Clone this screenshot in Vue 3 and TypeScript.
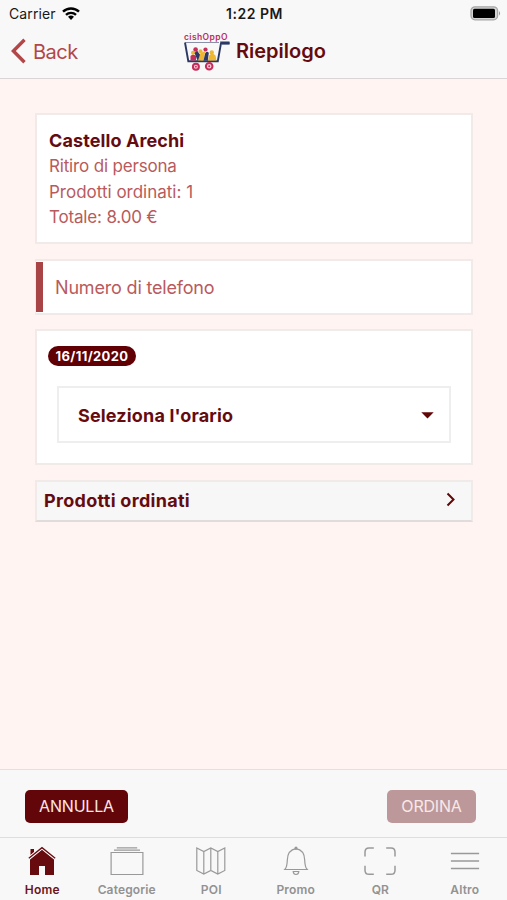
<script setup lang="ts">
import { ref } from 'vue'

interface Tab {
  id: string
  label: string
  spacing: number
}

const tabs: Tab[] = [
  { id: 'home', label: 'Home', spacing: 0.2 },
  { id: 'categorie', label: 'Categorie', spacing: 0.15 },
  { id: 'poi', label: 'POI', spacing: 0.2 },
  { id: 'promo', label: 'Promo', spacing: 0.2 },
  { id: 'qr', label: 'QR', spacing: 0 },
  { id: 'altro', label: 'Altro', spacing: 0.15 },
]
const active = ref('home')
const phone = ref('')
</script>

<template>
  <div class="screen">
    <header class="top">
      <div class="status">
        <div class="carrier">
          <span>Carrier</span>
          <svg class="wifi" width="18" height="14" viewBox="0 0 18 14">
            <g fill="none" stroke="#000" stroke-width="2.4">
              <path d="M1 4.700C5.400.400 12.600.400 17 4.700" />
              <path d="M4 7.900C6.800 5.200 11.200 5.200 14 7.900" />
            </g>
            <path d="M6 9.800Q9 7.400 12 9.800L9 12.900Z" />
          </svg>
        </div>
        <span class="clock">1:22 PM</span>
        <svg class="battery" width="32" height="15" viewBox="0 0 32 15">
          <rect x="1" y=".8" width="26.600" height="13" rx="4" fill="#d4d4d4" stroke="#a6a6a6" stroke-width="1.300" />
          <rect x="3" y="2.800" width="22" height="9.200" rx="1.500" fill="#000" />
          <path d="M29 5Q31.200 7.300 29 9.600Z" fill="#999" />
        </svg>
      </div>
      <div class="navbar">
        <button class="back" type="button">
          <svg width="17" height="26" viewBox="0 0 17 26">
            <path d="M14.500 1.800L3.400 13L14.500 24.200" fill="none" stroke="#b2474a" stroke-width="3.400" />
          </svg>
          <span>Back</span>
        </button>
        <div class="brand">
          <svg class="logo" width="48" height="40" viewBox="0 0 48 40">
            <text x="1" y="8.200" textLength="43.500" lengthAdjust="spacing" font-size="8.500" font-weight="600" fill="#bd2c63">cishOppO</text>
            <path d="M2 10.500L5.300 29.200H34.800L38 11.200H46.500" fill="none" stroke="#2b3864" stroke-width="1.900" />
            <path d="M37 9.400H46.500V12.400H39Z" fill="#2b3864" />
            <path d="M2 10.500H36" stroke="#5a6484" stroke-width=".7" />
            <path d="M7.500 28.500V24Q10 21 13 24V28.500Z" fill="#c42f5c" />
            <circle cx="10" cy="20.800" r="2" fill="#efb62f" />
            <path d="M11.500 21L14 18.500L18 24V28.500H14.500Z" fill="#2d3869" />
            <circle cx="12.600" cy="17.500" r="2.300" fill="#c42f5c" />
            <path d="M15 28.500L17.500 21L22.300 19L20.500 28.500Z" fill="#efb62f" />
            <circle cx="17.500" cy="19.200" r="2" fill="#efb62f" />
            <path d="M20.500 28.500L22.300 21Q24.500 18.500 25.800 21L24.800 28.500Z" fill="#2d3869" />
            <circle cx="22.500" cy="17.500" r="2.100" fill="#c42f5c" />
            <path d="M25 28.500L26 23.500Q29.500 20 32.500 23.500L33.500 28.500Z" fill="#efb62f" />
            <circle cx="28.800" cy="20.500" r="2.200" fill="#efb62f" />
            <g fill="#f5ced9" stroke="#c52b5b" stroke-width="2">
              <circle cx="12.900" cy="34.700" r="3" />
              <circle cx="26.200" cy="34.300" r="3.300" />
            </g>
            <g fill="#c52b5b">
              <circle cx="12.900" cy="34.700" r=".9" />
              <circle cx="26.200" cy="34.300" r="1" />
            </g>
          </svg>
          <h1>Riepilogo</h1>
        </div>
      </div>
    </header>

    <main class="content">
      <section class="card summary">
        <h2>Castello Arechi</h2>
        <p class="mode">Ritiro di persona</p>
        <p class="count">Prodotti ordinati: 1</p>
        <p class="total">Totale: 8.00 €</p>
      </section>
      <section class="card phone">
        <input v-model="phone" type="tel" placeholder="Numero di telefono" />
      </section>
      <section class="card schedule">
        <span class="date">16/11/2020</span>
        <button class="select" type="button">
          <span>Seleziona l'orario</span>
          <svg width="13" height="7" viewBox="0 0 13 7"><path d="M.3.300H12.700L6.500 6.600Z" fill="#600808" /></svg>
        </button>
      </section>
      <button class="card products" type="button">
        <span>Prodotti ordinati</span>
        <svg width="10" height="15" viewBox="0 0 10 15">
          <path d="M1.500 1.500L7.500 7.500L1.500 13.500" fill="none" stroke="#600808" stroke-width="2" />
        </svg>
      </button>
    </main>

    <footer>
      <div class="actions">
        <button class="action cancel" type="button">ANNULLA</button>
        <button class="action order" type="button" disabled>ORDINA</button>
      </div>
      <nav class="tabs">
        <a v-for="tab in tabs" :key="tab.id" :class="['tab', { active: tab.id === active }]" @click="active = tab.id">
          <svg class="icon" width="34" height="32" viewBox="0 0 34 32" fill="none" stroke="#999" stroke-width="1.200">
            <template v-if="tab.id === 'home'">
              <g fill="#680b0f" stroke="none">
                <path d="M17 5.500L5 15V31H14V22H20V31H29V15Z" />
                <path d="M5.500 5H9V8L5.500 11Z" />
              </g>
              <path d="M3.800 14.500L17 3.900L30.200 14.500" stroke="#f8f8f8" stroke-width="3" />
              <path d="M3.800 14.300L17 3.700L30.200 14.300" stroke="#680b0f" stroke-width="1.300" />
            </template>
            <template v-else-if="tab.id === 'categorie'">
              <path d="M1.100 8.500H32.900V30.500H1.100Z" />
              <path d="M4 6.200H30M6.800 3.900H27.200" />
            </template>
            <template v-else-if="tab.id === 'poi'">
              <path d="M2.800 4L9.800 7.500L16.800 4L23.800 7.500L30.800 4V26.500L23.800 30L16.800 26.500L9.800 30L2.800 26.500ZM9.800 7.500V30M16.800 4V26.500M23.800 7.500V30" />
            </template>
            <template v-else-if="tab.id === 'promo'">
              <path d="M5.800 25.500C8 23.200 8.200 20.500 8.300 16C8.500 9 11.500 5.500 17 4.600C22.500 5.500 25.500 9 25.700 16C25.800 20.500 26 23.200 28.200 25.500Z" />
              <path d="M14.200 27.500C14.500 31.500 19.500 31.500 19.800 27.500Z" />
              <circle cx="17" cy="4.200" r="1" fill="#999" />
            </template>
            <template v-else-if="tab.id === 'qr'">
              <path d="M2 12.500V8Q2 3.900 6 3.900H10.800M23.200 3.900H28Q32 3.900 32 8V12.500M32 21.700V26.200Q32 30.300 28 30.300H23.200M10.800 30.300H6Q2 30.300 2 26.200V21.700" stroke-width="1.500" />
            </template>
            <path v-else d="M2.900 9.500H31.100M2.900 17H31.100M2.900 24.500H31.100" stroke-width="1.300" />
          </svg>
          <span :style="{ letterSpacing: tab.spacing + 'px' }">{{ tab.label }}</span>
        </a>
      </nav>
    </footer>
  </div>
</template>

<style>
body {
  margin: 0;
}
</style>

<style scoped>
.screen {
  box-sizing: border-box;
  width: 507px;
  height: 900px;
  display: flex;
  flex-direction: column;
  overflow: hidden;
  background: #fff4f1;
  font-family: Inter, sans-serif;
  color: #650b0f;
}
button {
  font: inherit;
  color: inherit;
  border: 0;
  background: none;
  padding: 0;
}
h1, h2, p {
  margin: 0;
}
svg {
  display: block;
  flex: none;
}
.top {
  box-sizing: border-box;
  height: 79px;
  flex: none;
  background: #f8f8f8;
  border-bottom: 1px solid #d9d5d4;
}
.status {
  height: 27px;
  display: grid;
  grid-template-columns: 1fr auto 1fr;
  align-items: center;
  padding: 0 5px 0 9px;
  color: #191919;
}
.carrier {
  display: flex;
  align-items: center;
  gap: 6px;
  font-size: 14px;
  line-height: 27px;
  letter-spacing: .1px;
}
.clock {
  font-size: 14px;
  font-weight: 600;
  letter-spacing: .5px;
  margin-right: 2px;
}
.battery {
  justify-self: end;
}
.navbar {
  height: 51px;
  display: grid;
  grid-template-columns: 183px 1fr;
}
.back {
  height: 48px;
  display: flex;
  align-items: center;
  gap: 6px;
  padding-left: 10px;
  font-size: 20px;
  letter-spacing: -.5px;
  color: #b2474a;
}
.back span {
  padding-top: 2px;
}
.brand {
  display: flex;
  gap: 5px;
  padding-top: 5px;
}
.brand h1 {
  font-size: 20px;
  line-height: 38px;
  font-weight: 600;
}
.content {
  flex: 1;
  display: flex;
  flex-direction: column;
  align-items: stretch;
  padding: 34px 34px 0 35px;
}
.card {
  box-sizing: border-box;
  background: #fff;
  border: 2px solid #f0eae8;
}
.summary {
  height: 131px;
  margin-bottom: 15px;
  padding: 13px 12px;
}
.summary h2 {
  font-size: 18px;
  line-height: 25px;
  font-weight: 700;
  letter-spacing: .1px;
}
.summary p {
  font-size: 17px;
  line-height: 25.600px;
  letter-spacing: -.17px;
  color: #b95a5d;
  position: relative;
  top: 1px;
}
.summary .count {
  letter-spacing: 0;
}
.phone {
  height: 56px;
  margin-bottom: 14px;
  display: flex;
  padding: 1px 0;
  border-left-width: 1px;
}
.phone input {
  flex: 1;
  box-sizing: border-box;
  border: 0;
  border-left: 7px solid #a94446;
  outline: none;
  padding: 0 12px;
  background: transparent;
  font: 18px Inter, sans-serif;
  letter-spacing: -.18px;
  color: #b95a5d;
}
.phone input::placeholder {
  color: #b95a5d;
  opacity: 1;
}
.schedule {
  height: 136px;
  margin-bottom: 15px;
  padding: 15px 20px 0 11px;
  display: flex;
  flex-direction: column;
  align-items: flex-start;
}
.date {
  box-sizing: border-box;
  width: 88px;
  height: 20px;
  border-radius: 10px;
  background: #600005;
  color: #fff;
  font-size: 13px;
  font-weight: 700;
  letter-spacing: .35px;
  line-height: 20px;
  text-align: center;
}
.select {
  box-sizing: border-box;
  align-self: stretch;
  height: 57px;
  margin: 20px 0 0 9px;
  border: 2px solid #eeeeee;
  display: flex;
  align-items: center;
  justify-content: space-between;
  padding: 2px 15px 0 19px;
  font-size: 18px;
  font-weight: 700;
  letter-spacing: .15px;
}
.products {
  height: 42px;
  display: flex;
  align-items: center;
  justify-content: space-between;
  padding: 0 15px 1px 7px;
  background: #f7f7f7;
  border-bottom-color: #dfdcdb;
  font-size: 18px;
  font-weight: 700;
  letter-spacing: .3px;
}
.products svg {
  margin-bottom: 3px;
}
footer {
  flex: none;
  background: #f8f8f8;
}
.actions {
  box-sizing: border-box;
  height: 68px;
  border-top: 1px solid #e7dfdc;
  display: flex;
  align-items: center;
  justify-content: space-between;
  padding: 5px 31px 0 25px;
}
.action {
  height: 33px;
  border-radius: 5px;
  font-size: 16px;
  line-height: 33px;
  letter-spacing: -.2px;
}
.cancel {
  width: 103px;
  background: #63060a;
  color: #fae7e5;
}
.order {
  width: 89px;
  background: #bd989a;
  color: #f8e9e8;
}
.tabs {
  box-sizing: border-box;
  height: 63px;
  border-top: 1px solid #dedede;
  display: grid;
  grid-template-columns: repeat(6, 1fr);
  padding-top: 6px;
}
.tab {
  display: flex;
  flex-direction: column;
  align-items: center;
  gap: 6px;
  color: #929292;
  font-size: 12px;
  line-height: 15px;
  font-weight: 600;
}
.tab.active {
  color: #6a1418;
}
</style>
